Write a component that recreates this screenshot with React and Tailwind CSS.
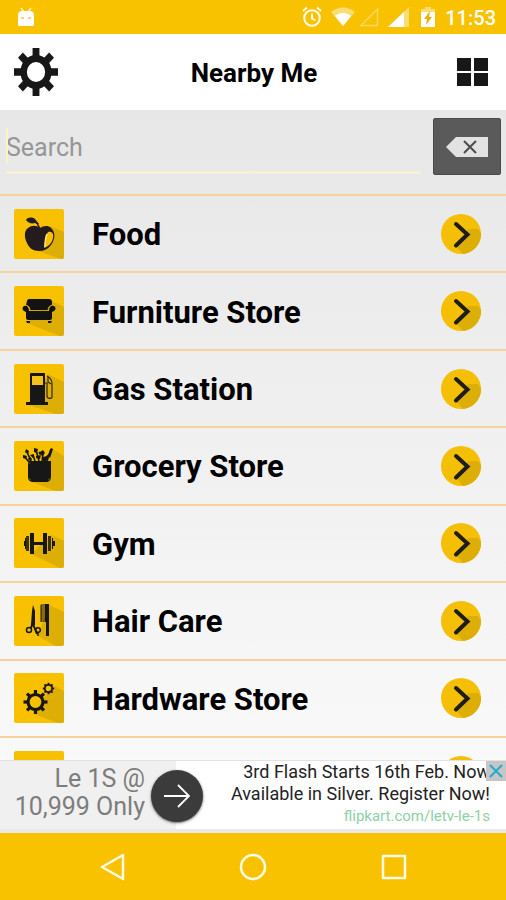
import { useState } from 'react';

// Gear made of a ring and evenly turned teeth
const Gear = ({ cx, cy, ring, stroke, reach, tooth, teeth = 8 }) => (
  <g fill="#171717">
    <circle cx={cx} cy={cy} r={ring} fill="none" stroke="#171717" strokeWidth={stroke} />
    {Array.from({ length: teeth }, (_, i) => (
      <rect key={i} x={cx - tooth / 2} y={cy - reach} width={tooth} height={reach - ring}
        transform={`rotate(${(360 / teeth) * i} ${cx} ${cy})`} />
    ))}
  </g>
);

const Apple = () => (
  <g fill="#231b1e">
    <path d="M12 11c2-3 6-3 9-1l4 5c-2 0-3 0-4-1-3 1-7 0-9-3Z" />
    <path d="M26 19c3-2 8-3 11 0 5 4 4 12 0 17-3 4-7 6-12 6-6 0-10-3-12-8-3-6-3-12 1-15 4-3 8-3 12 0Z" />
    <path d="M23 14l3 6" stroke="#231b1e" strokeWidth="1.5" />
    <path d="M34 23c4-1 6 2 5 6-1 5-4 8-9 10 1-5 1-12 4-16Z" fill="#f7c100" />
    <path d="M33 25c-2 4-2 8-2 13" fill="none" stroke="#ffe680" strokeWidth="1.5" />
  </g>
);

const Sofa = () => (
  <g fill="#121212">
    <path d="M15 13h20c2 0 3 1 3 3v3c-3 1-4 3-4 5H16c0-3-1-4-4-5l1-4c0-1 1-2 2-2Z" />
    <path d="M10 20c3-1 5 1 5 5h20c0-4 2-6 5-5 2 1 2 4 0 5l-2 1v6c0 1-1 2-2 2H14c-1 0-2-1-2-2v-6l-2-1c-2-1-2-4 0-5Z" />
    <path d="M12 35h4v2h-3ZM34 35h4l-1 2h-3Z" />
    <path d="M12 19c3 1 4 3 4 5.500h18c0-3 1-4.500 4-5.500" fill="none" stroke="#c99f08" strokeWidth="0.8" />
  </g>
);

const Pump = () => (
  <g>
    <path d="M16 10c0-1 1-1 1-1h13c1 0 1 0 1 1v28h3v3H12v-3h4Z" fill="#171717" />
    <path d="M18 12h11v9H18Z" fill="#f3c21c" />
    <path d="M33 12c4 2 5 4 5 8v13c0 2-5 2-5-1V19h-2M34 13v5l3 2" fill="none" stroke="#2e270d" strokeWidth="1.2" />
  </g>
);

const Basket = () => (
  <g fill="#171717">
    <path d="M14 20h23v16c0 3-1 4-4 5H18c-3-1-4-2-4-5Z" />
    <path d="M14 22h2M14 37l3 2M34 39l3-2" stroke="#6b560a" strokeWidth="1" />
    <path d="M15 21l-5-6M17 20l-4-9M21 20l-2-6M25 20l-3-11M28 20l1-7M33 20l4-12M31 20l3-6" fill="none" stroke="#171717" strokeWidth="1.6" />
    <path d="M34 14l3-7 2 1-3 9ZM9 14l4 1-1 3-3-1ZM12 8l3 2-1 3-3-2ZM16 14l4-1-1 4ZM20 7l4 1-1 4-3-1ZM25 12l4-3 2 3-3 3ZM22 15l5-1-1 4-4-1ZM29 16l4-1-1 5h-3Z" />
    <circle cx="26" cy="12" r="1.5" />
    <circle cx="16" cy="18" r="1.8" />
  </g>
);

const Dumbbell = () => (
  <g fill="#171717">
    <path d="M16 15h4v21h-4ZM29 15h4v21h-4ZM20 24h9v3h-9Z" />
    <path d="M12 18h3v15h-3ZM34 18h3v15h-3Z" fill="#3b310b" />
    <path d="M10 23h1v5h-1ZM38 20h1v11h-1ZM11 20h1v11h-1ZM39 23h2v5h-2Z" />
  </g>
);

const Scissors = () => (
  <g fill="none" stroke="#171717">
    <path d="M19 9l2 6v14h-4l1-14Z" fill="#171717" stroke="none" />
    <path d="M19 26l-2 6M19 28l4 10" strokeWidth="2" />
    <circle cx="15" cy="34" r="2.5" strokeWidth="1.5" />
    <circle cx="24" cy="34" r="2.3" strokeWidth="1.5" />
    <path d="M24 36v4" strokeWidth="1.5" />
    <path d="M31 8h4v32h-3V26h-1Z" fill="#171717" stroke="none" />
    <path d="M27 9v17M27 9h5M27 11h5M27 13h5M27 15h5M27 17h5M27 19h5M27 21h5M27 23h5M27 25h5" strokeWidth="1" />
  </g>
);

const Gears = () => (
  <g>
    <Gear cx={21.5} cy={29} ring={7.5} stroke={3.2} reach={12} tooth={3.2} />
    <Gear cx={34.5} cy={15.5} ring={3.7} stroke={1.8} reach={5.7} tooth={1.8} />
  </g>
);

const categories = [
  { name: 'Food', icon: Apple, shadow: 'M36 17l14 6v27h-3L18 40Z' },
  { name: 'Furniture Store', icon: Sofa, shadow: 'M38 15l12 6v29h-4L13 37Z' },
  { name: 'Gas Station', icon: Pump, shadow: 'M34 10l16 8v32h-8L15 41Z' },
  { name: 'Grocery Store', icon: Basket, shadow: 'M38 8l12 7v35h-8L18 41Z' },
  { name: 'Gym', icon: Dumbbell, shadow: 'M37 17l13 6v27h-4L17 36Z' },
  { name: 'Hair Care', icon: Scissors, shadow: 'M35 9l15 7v34h-8L24 40Z' },
  { name: 'Hardware Store', icon: Gears, shadow: 'M38 12l12 6v32h-6L20 41Z' },
];

const Tile = ({ icon: Icon, shadow }) => (
  <svg viewBox="0 0 50 50" className="h-[50px] w-[50px] shrink-0 rounded-xs bg-[#f7c100]" aria-hidden="true">
    {shadow && <path d={shadow} fill="#dcae06" />}
    {Icon && <Icon />}
  </svg>
);

const Chevron = () => (
  <svg viewBox="0 0 40 40" className="h-10 w-10 shrink-0" aria-hidden="true">
    <circle cx="20" cy="20" r="20" fill="#f5bf06" />
    <path d="M27 15h10l3 4a20 20 0 0 1-18 21l-6-7Z" fill="#dcae06" />
    <path d="M15 10l11.500 10.500L15 31.500" fill="none" stroke="#1d1d1d" strokeWidth="4" strokeLinecap="round" />
  </svg>
);

const StatusBar = () => (
  <div className="flex h-[34px] shrink-0 items-center bg-[#f9c200] pr-[10px] pl-[17px] text-white">
    <svg viewBox="0 0 18 20" className="h-5 w-[18px]" aria-hidden="true">
      <path d="M4 1l3 4M14 1l-3 4" stroke="#fff0b8" strokeWidth="1.5" />
      <path d="M1 8c0-3 2-4 4-4h8c2 0 4 1 4 4v9c0 2-1 2-2 2H3c-1 0-2 0-2-2Z" fill="#fff" />
      <path d="M4 11h3M11 11h3" stroke="#f2ca4c" strokeWidth="1.5" />
    </svg>
    <svg viewBox="0 0 22 22" className="ml-auto h-[22px] w-[22px]" fill="none" stroke="#fffaf0" aria-hidden="true">
      <circle cx="11" cy="12" r="7.8" strokeWidth="2" />
      <path d="M11 7.500v5l3.500 2M2 5l4-3.500M20 5l-4-3.500" strokeWidth="2" />
    </svg>
    <svg viewBox="0 0 24 20" className="ml-2 h-5 w-6" aria-hidden="true">
      <path d="M0 5c7-6 17-6 24 0L12 19Z" fill="#fbdd75" />
      <path d="M4 9c5-4 11-4 16 0l-8 10Z" fill="#fff" />
    </svg>
    <svg viewBox="0 0 20 20" className="ml-1 h-5 w-5" aria-hidden="true">
      <path d="M18.500 2v16.500H2Z" fill="none" stroke="#fbd75c" strokeWidth="1.5" />
    </svg>
    <svg viewBox="0 0 21 20" className="ml-[9px] h-5 w-[21px]" aria-hidden="true">
      <path d="M21 0v20H0Z" fill="#fbdd75" />
      <path d="M16 5v15H0Z" fill="#fff" />
    </svg>
    <svg viewBox="0 0 14 20" className="ml-3 h-5 w-[14px]" aria-hidden="true">
      <path d="M4 0h6v2h4v5H0V2h4Z" fill="#fbdd75" />
      <path d="M0 5h14v15H0Z" fill="#fff" />
      <path d="M9 4l-6 8h3l-1 6 6-8H8Z" fill="#e9b000" />
    </svg>
    <span className="ml-[10px] pt-[2px] text-xl font-medium">11:53</span>
  </div>
);

const AdBanner = () => (
  <div className="relative flex h-[73px] shrink-0 border-t border-b-4 border-t-[#e2e2e2] border-b-[#e9e9e9] bg-white">
    <a href="#offer" className="flex w-[176px] shrink-0 flex-col bg-[#f0f0f0] pt-1 pr-[31px] text-right text-[25px] leading-7 whitespace-nowrap text-[#7d7d7d]">
      <span>Le 1S @</span>
      <span>10,999 Only</span>
    </a>
    <a href="#offer" className="flex-1 pr-4 text-right text-lg leading-[22px] whitespace-nowrap text-[#222]">
      <span className="block">3rd Flash Starts 16th Feb. Now</span>
      <span className="block">Available in Silver. Register Now!</span>
      <span className="block text-[15px] text-[#8fcfa6]">flipkart.com/letv-le-1s</span>
    </a>
    <a href="#offer" aria-label="Open offer" className="absolute top-[9px] left-[151px] flex h-[52px] w-[52px] items-center justify-center rounded-full bg-[#3b3b3b] shadow-sm shadow-black/50">
      <svg viewBox="0 0 26 24" className="h-6 w-[26px]" fill="none" stroke="#fff" strokeWidth="1.8" aria-hidden="true">
        <path d="M0 12h25M14 1l11 11-11 11" />
      </svg>
    </a>
    <button aria-label="Close ad" className="absolute top-0 right-0 flex h-5 w-5 items-center justify-center bg-[#c6c6c6]">
      <svg viewBox="0 0 14 14" className="h-[14px] w-[14px]" stroke="#27a9cf" strokeWidth="2" aria-hidden="true">
        <path d="M1 1l12 12M13 1L1 13" />
      </svg>
    </button>
  </div>
);

const NavBar = () => (
  <nav className="flex h-[67px] shrink-0 items-center justify-center gap-[113px] bg-[#f9c200]">
    <button aria-label="Back">
      <svg viewBox="0 0 28 28" className="h-7 w-7" fill="none" stroke="#fffbe8" strokeWidth="2.500" strokeLinejoin="round" aria-hidden="true">
        <path d="M25 2v24L4 14Z" />
      </svg>
    </button>
    <button aria-label="Home">
      <svg viewBox="0 0 28 28" className="h-7 w-7" fill="none" stroke="#fffbe8" strokeWidth="2.500" aria-hidden="true">
        <circle cx="14" cy="14" r="12" />
      </svg>
    </button>
    <button aria-label="Recent apps">
      <svg viewBox="0 0 28 28" className="h-7 w-7" fill="none" stroke="#fffbe8" strokeWidth="2.500" strokeLinejoin="round" aria-hidden="true">
        <path d="M3 3h22v22H3Z" />
      </svg>
    </button>
  </nav>
);

const App = () => {
  const [search, setSearch] = useState('');
  const filtered = categories.filter(c => c.name.toLowerCase().includes(search.toLowerCase()));

  return (
    <div className="flex h-screen flex-col overflow-hidden bg-white font-['Roboto',sans-serif] text-black">
      <StatusBar />

      {/* Header */}
      <header className="flex h-[76px] shrink-0 items-center justify-between pr-[18px] pl-[14px]">
        <button aria-label="Settings">
          <svg viewBox="0 0 48 48" preserveAspectRatio="none" className="h-12 w-11" aria-hidden="true">
            <Gear cx={24} cy={24} ring={13.5} stroke={7} reach={24} tooth={7.5} />
          </svg>
        </button>
        <h1 className="pt-[2px] text-[26px] font-bold">Nearby Me</h1>
        <button aria-label="Grid view" className="flex w-[38px] justify-end">
          <svg viewBox="0 0 31 28" className="h-7 w-[31px]" fill="#171717" aria-hidden="true">
            <path d="M0 0h14v13H0ZM17 0h14v13H17ZM0 15h14v13H0ZM17 15h14v13H17Z" />
          </svg>
        </button>
      </header>

      <main className="flex min-h-0 flex-1 flex-col overflow-hidden bg-linear-to-b from-[#e7e7e7] to-[#f9f9f9]">
        {/* Search */}
        <div className="flex h-[84px] shrink-0 items-start gap-3 pt-2 pr-[5px] pl-[6px]">
          <div className="relative flex-1">
            <input type="text" aria-label="Search" placeholder="Search" value={search} onChange={e => setSearch(e.target.value)}
              className="h-[56px] w-full border-b-3 border-[#f8f0d2] pt-[5px] text-[25px] placeholder:text-[#969696] focus:outline-none" />
            <span className="absolute top-[10px] left-0 h-9 w-[2px] bg-[#f8f3c8]" />
          </div>
          <button aria-label="Clear search" onClick={() => setSearch('')}
            className="flex h-[57px] w-[68px] items-center justify-center rounded-xs border border-[#4a4a4a] bg-[#5a5a5b]">
            <svg viewBox="0 0 42 20" className="h-5 w-[42px]" aria-hidden="true">
              <path d="M10 0h32v20H10L0 10Z" fill="#e2e2e2" />
              <path d="M18 4l12 12M30 4L18 16" stroke="#4c4c4c" strokeWidth="2" />
            </svg>
          </button>
        </div>

        {/* Categories */}
        <ul className="flex min-h-0 flex-1 flex-col overflow-hidden">
          {filtered.map(c => (
            <li key={c.name} className="max-h-20 flex-1 border-t-2 border-[#f6d39c]">
              <a href="#places" className="flex h-full items-center pr-[25px] pl-[14px]">
                <Tile icon={c.icon} shadow={c.shadow} />
                <span className="ml-7 flex-1 pt-[3px] text-[31px] leading-9 font-bold">{c.name}</span>
                <Chevron />
              </a>
            </li>
          ))}
          {/* next row peeks out above the banner */}
          <li className="h-6 shrink-0 overflow-hidden border-t-2 border-[#f6d39c]">
            <div className="flex h-[76px] items-center justify-between pr-[25px] pl-[14px]">
              <Tile />
              <Chevron />
            </div>
          </li>
        </ul>
      </main>

      <AdBanner />
      <NavBar />
    </div>
  );
};

export default App;
